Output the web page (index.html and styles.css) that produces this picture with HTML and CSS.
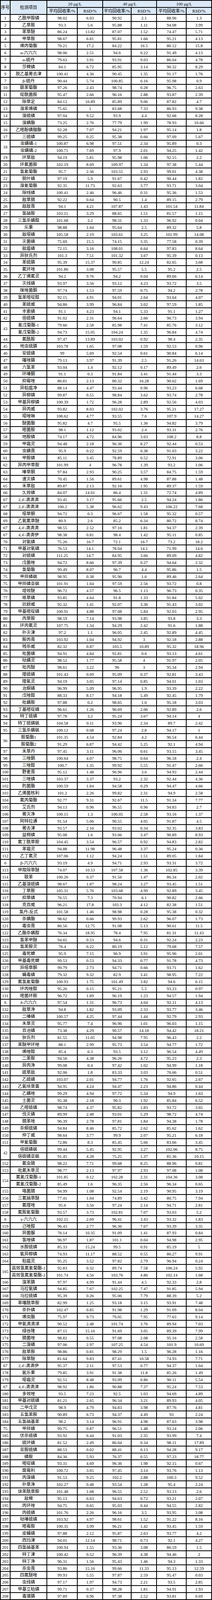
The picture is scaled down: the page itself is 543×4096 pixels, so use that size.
FILE: index.html
```html
<!DOCTYPE html>
<html lang="zh">
<head>
<meta charset="utf-8">
<title>回收率与RSD</title>
<link rel="stylesheet" href="styles.css">
</head>
<body>
<div class="sheet">
<p class="h r2">序号<p class="h r2">检测项目<p class="h c2">20 μg/L<p class="h c2">40 μg/L<p class="h c2">100 μg/L
<p class="h">平均回收率/%<p class="h">RSD/%<p class="h">平均回收率/%<p class="h">RSD/%<p class="h">平均回收率/%<p class="h">RSD/%
<p>1<p>乙酰甲胺磷<p>98.02<p>6.03<p>90.92<p>2.1<p>88.96<p>1.3
<p>2<p>乙草胺<p>93.3<p>5.6<p>95.88<p>1.11<p>94.08<p>3.99
<p>3<p>苯草醚<p>86.24<p>13.82<p>87.07<p>1.52<p>74.47<p>5.71
<p>4<p>甲草胺<p>98.67<p>6.81<p>95.81<p>1.66<p>95.21<p>4.13
<p>5<p>烯丙菊酯<p>70.21<p>17.2<p>84.22<p>16.5<p>80.12<p>15.8
<p>6<p>α-六六六<p>98.06<p>2.51<p>94.6<p>0.22<p>91.49<p>4.13
<p>7<p>α-硫丹<p>79.63<p>3.91<p>93.91<p>9.03<p>86.04<p>4.78
<p>8<p>莎稗磷<p>84.1<p>6.72<p>85.95<p>3.14<p>90.32<p>8.29
<p>9<p>脱乙基莠去津<p>100.41<p>4.36<p>90.45<p>1.35<p>91.17<p>1.76
<p>7<p>β-硫丹<p>90.44<p>5.74<p>100.85<p>6.16<p>95.98<p>0.9
<p>10<p>联苯菊酯<p>97.26<p>2.43<p>98.74<p>0.28<p>96.75<p>2.63
<p>11<p>啶酰菌胺<p>95.47<p>2.66<p>96.16<p>2.88<p>93.87<p>2.39
<p>12<p>除草定<p>84.12<p>16.89<p>85.89<p>9.06<p>87.82<p>4.7
<p>13<p>溴苯烯磷<p>75.65<p>1<p>83.68<p>7.33<p>86.93<p>9.38
<p>14<p>溴硫磷<p>97.04<p>9.52<p>93.9<p>4.4<p>92.68<p>8.28
<p>15<p>溴螨酯<p>73.25<p>2.76<p>77.79<p>1.99<p>78.93<p>10.66
<p>16<p>乙嘧酚磺酸酯<p>92.28<p>7.07<p>94.21<p>1.97<p>95.14<p>1.8
<p>17<p>三硫磷<p>99.25<p>0.25<p>95.38<p>0.66<p>97.09<p>5.67
<p class="r2">18<p>虫螨磷-1<p>100.87<p>6.98<p>97.51<p>2.34<p>95.89<p>0.3
<p>虫螨磷-2<p>100.71<p>7.69<p>97.9<p>2.01<p>94.25<p>1.42
<p>19<p>环草敌<p>94.19<p>5.81<p>95.98<p>1.06<p>92.15<p>2.2
<p>20<p>环氟菌胺<p>102.19<p>8.69<p>109.97<p>1.34<p>97.38<p>5.44
<p>21<p>氯氰菊酯<p>95.7<p>2.36<p>103.55<p>2.93<p>99.01<p>4.38
<p>22<p>脱叶磷<p>97.19<p>5.9<p>91.67<p>0.42<p>90.44<p>1.82
<p>23<p>溴氰菊酯<p>92.35<p>11.73<p>92.63<p>3.77<p>93.71<p>3.04
<p>24<p>除线磷<p>100.41<p>2.46<p>96.46<p>0.31<p>95.36<p>1.53
<p>25<p>敌草腈<p>92.22<p>0.64<p>90.5<p>1.4<p>89.15<p>2.79
<p>26<p>敌敌畏<p>94.1<p>4.21<p>107.87<p>1.43<p>101.54<p>11.84
<p>27<p>氯硝胺<p>103.15<p>3.29<p>88.65<p>1.51<p>81.57<p>1.15
<p>28<p>三氯杀螨醇<p>101.68<p>3.2<p>98.31<p>1.33<p>96.92<p>0.04
<p>29<p>乐果<p>98.88<p>1.64<p>95.64<p>2.5<p>89.32<p>5.8
<p>30<p>敌噁磷<p>105.58<p>2.19<p>103.61<p>3.25<p>101.99<p>14.08
<p>31<p>灭菌磷<p>75.69<p>15.5<p>74.15<p>3.35<p>77.58<p>0.39
<p>32<p>敌瘟磷<p>72.15<p>3.16<p>108.01<p>6.64<p>97.83<p>8.64
<p>33<p>异狄氏剂<p>101.3<p>7.51<p>101.32<p>3.67<p>95.39<p>0.13
<p>34<p>苯硫膦<p>95.39<p>15.37<p>90.85<p>12.24<p>82.65<p>3.68
<p>35<p>氟环唑<p>101.86<p>3.08<p>95.57<p>5.5<p>95.2<p>2.5
<p>36<p>乙丁烯氟灵<p>94.2<p>9.76<p>94.2<p>0.04<p>89.66<p>6.14
<p>37<p>灭线磷<p>93.97<p>3.56<p>93.12<p>4.23<p>93.72<p>3.5
<p>38<p>咪唑菌酮<p>97.74<p>1.53<p>97.59<p>0.75<p>94.2<p>2.78
<p>39<p>氯苯嘧啶醇<p>92.15<p>4.91<p>94.01<p>2.64<p>93.64<p>4.07
<p>40<p>苯硫威<p>94.86<p>3.99<p>96.84<p>3.02<p>97.59<p>1.85
<p>41<p>丰索磷<p>91.1<p>4.23<p>94.1<p>5.33<p>91.1<p>1.27
<p>42<p>倍硫磷<p>91.02<p>2.31<p>96.64<p>2.66<p>90.73<p>3.94
<p class="r2">43<p>氰戊菊酯-1<p>79.66<p>2.58<p>85.98<p>7.41<p>85.76<p>3.12
<p>氰戊菊酯-2<p>94.73<p>15.05<p>104.24<p>1.35<p>96.84<p>4.74
<p>44<p>氟酰胺<p>97.47<p>13.89<p>103.02<p>0.92<p>98.4<p>2.35
<p>45<p>地虫硫膦<p>103.78<p>1.65<p>97.08<p>1.59<p>92.53<p>0.96
<p>46<p>安硫磷<p>99<p>5.69<p>92.54<p>0.61<p>90.84<p>6.14
<p>47<p>噻唑膦<p>79.13<p>3.97<p>91.39<p>2.5<p>91.26<p>14.63
<p>48<p>六氯苯<p>93.04<p>1.4<p>92.12<p>0.17<p>89.49<p>2.6
<p>49<p>环嗪酮<p>91.1<p>0.3<p>91.84<p>3.41<p>91.44<p>3.3
<p>50<p>抑霉唑<p>86.81<p>2.13<p>80.32<p>16.28<p>90.62<p>1.69
<p>51<p>异稻瘟净<p>88.14<p>4.47<p>93.44<p>0.96<p>93.23<p>6.68
<p>52<p>异柳磷<p>99.87<p>0.55<p>98.84<p>3.62<p>93.74<p>2.78
<p>53<p>甲基异柳磷<p>100.39<p>1.72<p>96.28<p>2.89<p>92.56<p>4.03
<p>54<p>异丙威<p>93.82<p>8.03<p>102.02<p>3.76<p>95.21<p>17.27
<p>55<p>噁唑啉<p>108.62<p>4.77<p>93.55<p>7.6<p>107.9<p>14.27
<p>56<p>醚菌酯<p>95.82<p>4.7<p>95.5<p>1.36<p>94.82<p>3.79
<p>57<p>嘧菌胺<p>98.1<p>1.12<p>93.02<p>2.4<p>93.31<p>2.76
<p>58<p>地胺磷<p>74.17<p>4.72<p>84.96<p>3.63<p>108.2<p>8.8
<p>59<p>甲霜灵<p>94.48<p>2.18<p>96.36<p>8.27<p>92.44<p>0.53
<p>60<p>虫螨畏<p>95.9<p>0.22<p>92.59<p>0.38<p>91.03<p>3.22
<p>61<p>甲胺磷<p>85.11<p>3.45<p>78.89<p>0.52<p>72.91<p>3.06
<p>62<p>异丙甲草胺<p>101.99<p>4<p>96.78<p>1.39<p>93.2<p>1.06
<p>63<p>嗪草酮<p>97.84<p>2.93<p>90.25<p>3.57<p>84.75<p>1.59
<p>64<p>速灭磷<p>70.45<p>1.56<p>89.61<p>4.98<p>87.88<p>1.48
<p>65<p>禾草敌<p>89.87<p>2.13<p>92.16<p>1.95<p>89.37<p>1.59
<p>66<p>久效磷<p>84.07<p>14.01<p>86.4<p>1.31<p>72.74<p>4.89
<p>67<p>2,4'-滴滴滴<p>93.45<p>3.17<p>95.66<p>2.5<p>94.24<p>1.86
<p>67<p>2,4'-滴滴涕<p>106.2<p>5.38<p>96.62<p>9.43<p>106.22<p>7.68
<p>68<p>噁草酮<p>94.72<p>0.3<p>96.67<p>1.58<p>95.32<p>0.57
<p>69<p>乙氧氟草醚<p>80.9<p>2.6<p>85.2<p>6.34<p>80.72<p>8.74
<p>67<p>4,4'-滴滴滴<p>98.55<p>2.52<p>97.16<p>1.81<p>94.37<p>2.39
<p>67<p>4,4'-滴滴伊<p>98.38<p>0.81<p>98.4<p>1.42<p>95.11<p>0.85
<p>70<p>对氧磷<p>75.26<p>16.7<p>72.1<p>16.7<p>73.2<p>18.2
<p>71<p>甲基对氧磷<p>76.53<p>14.1<p>78.04<p>14.1<p>71.99<p>14.6
<p>72<p>对硫磷<p>111.25<p>14.7<p>84.95<p>3.66<p>89.09<p>4.82
<p>73<p>戊菌唑<p>94.72<p>8.66<p>97.39<p>0.27<p>94.64<p>2.32
<p>74<p>氯菊酯<p>99.49<p>8.07<p>96.7<p>4.4<p>95.86<p>1.5
<p>75<p>甲拌磷砜<p>98.95<p>0.38<p>95.96<p>1.6<p>89.46<p>2.64
<p>75<p>甲拌磷亚砜<p>101.91<p>1.04<p>97.59<p>2.56<p>93.72<p>0.8
<p>76<p>增效醚<p>96.72<p>4.57<p>96.5<p>1.13<p>96.73<p>0.35
<p>77<p>哌草磷<p>93.85<p>4.64<p>91.8<p>1.33<p>91.84<p>5.02
<p>78<p>抗蚜威<p>92.32<p>1.41<p>92.07<p>3.36<p>91.43<p>3.02
<p>79<p>甲基嘧啶磷<p>100.91<p>4.88<p>97.08<p>5.84<p>92.03<p>2.95
<p>80<p>丙草胺<p>98.59<p>7.14<p>93.98<p>3.85<p>93.8<p>3.3
<p>81<p>环丙氟灵<p>107.75<p>1.34<p>94.29<p>2.42<p>91.6<p>1.88
<p>82<p>扑灭津<p>97.2<p>1.1<p>96.05<p>2.45<p>92.89<p>4.45
<p>83<p>胺丙畏<p>103.92<p>1.04<p>94.92<p>3<p>92.18<p>2.88
<p>84<p>残杀威<p>82.32<p>0.87<p>103.5<p>10.89<p>95.32<p>18.96
<p>85<p>吡菌磷<p>94.91<p>4.84<p>92.81<p>0.6<p>93.13<p>4.61
<p>86<p>哒螨灵<p>98.52<p>1.77<p>95.58<p>4<p>91.97<p>2.05
<p>87<p>吡丙醚<p>98.61<p>3.22<p>96<p>3<p>95.34<p>2.94
<p>88<p>喹硫磷<p>101.43<p>0.69<p>95.09<p>0.37<p>92.81<p>3.43
<p>89<p>喹氧灵<p>94.19<p>3.05<p>97.14<p>0.85<p>94.01<p>1.03
<p>90<p>治螟磷<p>96.99<p>5.09<p>96.95<p>1.9<p>93.39<p>2.22
<p>91<p>戊唑醇<p>88.33<p>8.17<p>94.18<p>5.49<p>92.45<p>1.79
<p>92<p>吡螨胺<p>97.88<p>0.2<p>98.65<p>1.6<p>95.18<p>3.03
<p>93<p>丁基嘧啶磷<p>96.61<p>1.26<p>96.69<p>2.06<p>92.89<p>2.6
<p>94<p>特丁硫磷<p>97.78<p>3.2<p>95.24<p>3.67<p>94.14<p>4
<p>94<p>特丁硫磷砜<p>104.58<p>0.11<p>93.96<p>2.34<p>89.7<p>2.42
<p>95<p>三氯杀螨砜<p>100.12<p>0.68<p>97.24<p>2.8<p>94.17<p>1
<p class="r2">96<p>胺菊酯1<p>101.35<p>4.54<p>92.84<p>4.2<p>96.54<p>6.44
<p>胺菊酯2<p>91.29<p>6.87<p>94.42<p>5.25<p>92.1<p>4.94
<p>97<p>禾草丹<p>97.45<p>3.11<p>96.06<p>0.61<p>93.15<p>3.45
<p>98<p>三唑酮<p>100.64<p>4.07<p>98.75<p>0.64<p>96.18<p>2.4
<p>99<p>三唑醇<p>100.7<p>1.35<p>99.92<p>5.55<p>91.47<p>2.66
<p>100<p>野麦畏<p>95.12<p>1.48<p>96.96<p>3.6<p>94.93<p>2.44
<p>101<p>三唑磷<p>103.37<p>3.37<p>93.2<p>2.32<p>92.44<p>4.36
<p>102<p>肟菌酯<p>100.59<p>1.84<p>94.58<p>0.29<p>94.47<p>4.66
<p>103<p>乙烯菌核利<p>101.2<p>2.26<p>99.82<p>2.31<p>94.9<p>2.58
<p>104<p>氟丙菊酯<p>92.77<p>9.31<p>92.67<p>11.5<p>91.34<p>7.77
<p>105<p>艾氏剂<p>94.13<p>0.96<p>96.55<p>0.96<p>94.83<p>2.7
<p>106<p>莠灭净<p>100.15<p>1.3<p>100.05<p>2.58<p>93.16<p>1.37
<p>107<p>阿特拉通<p>91.54<p>5.06<p>90.55<p>4.05<p>91.87<p>4.5
<p>108<p>莠去津<p>93.57<p>2.16<p>93.02<p>0.34<p>92.35<p>3.83
<p>109<p>益棉磷<p>95.08<p>1.6<p>93.06<p>3.47<p>90.89<p>8.93
<p>110<p>氟丁酰草胺<p>104.45<p>3.54<p>96.57<p>0.92<p>94.83<p>2.82
<p>111<p>苯霜灵<p>94.88<p>11.98<p>96.48<p>3.37<p>95.24<p>0.36
<p>112<p>乙丁氟灵<p>107.06<p>1.12<p>94.24<p>1.51<p>89.05<p>1.84
<p>6<p>β-六六六<p>93.19<p>4.9<p>94.71<p>2.93<p>93.31<p>3.72
<p>113<p>甲羧除草醚<p>74.07<p>10.53<p>107.58<p>1.36<p>102.85<p>3.39
<p>114<p>联苯<p>100.26<p>0.37<p>91.56<p>1.47<p>86.34<p>2.02
<p>115<p>乙基溴硫磷<p>98.67<p>1.87<p>98.24<p>3.27<p>93.45<p>1.51
<p>116<p>丁草胺<p>105.31<p>5.76<p>103.68<p>4.99<p>92.89<p>3.45
<p>117<p>抑草磷<p>76.55<p>7.3<p>70.94<p>6.1<p>90.82<p>2.66
<p>118<p>克百威<p>96.21<p>17.8<p>103.3<p>4.12<p>82.38<p>1.51
<p>119<p>氯丹-反式<p>101.58<p>1.46<p>98.98<p>0.28<p>95.38<p>0.32
<p>120<p>杀螨酯<p>98.62<p>0.66<p>99.93<p>2.62<p>96.07<p>1.73
<p>121<p>毒虫畏<p>86.56<p>12.75<p>91.08<p>5.13<p>90.61<p>11.5
<p>122<p>乙酯杀螨醇<p>76.34<p>18.95<p>78.4<p>7.95<p>81.31<p>11.43
<p>123<p>氯苯甲醚<p>94.65<p>0.53<p>94.6<p>0.31<p>92.24<p>2.23
<p>124<p>氯苯胺灵<p>76.4<p>6.22<p>80.19<p>5.12<p>79.68<p>7.57
<p>125<p>毒死蜱<p>95.9<p>7.15<p>96.9<p>3.91<p>95.96<p>2.01
<p>126<p>甲基毒死蜱<p>99.53<p>0.53<p>94.33<p>0.77<p>91.78<p>4.73
<p>127<p>异噁草酮<p>99.79<p>2.73<p>94.71<p>0.66<p>93.71<p>1.62
<p>128<p>蝇毒磷<p>79.32<p>9.32<p>82.9<p>3.41<p>98.95<p>7.22
<p>129<p>氟氯氰菊酯<p>100.93<p>1.75<p>101.49<p>3.82<p>94.6<p>6.15
<p>130<p>环丙唑醇<p>95.26<p>0.15<p>95.21<p>5.5<p>93.23<p>0.97
<p>131<p>嘧菌环胺<p>96.72<p>1.89<p>96.19<p>1.23<p>94.57<p>1.94
<p>6<p>δ-六六六<p>97.54<p>1.31<p>96.73<p>4.64<p>92.11<p>4.13
<p>132<p>敌草净<p>94.8<p>1.82<p>93.09<p>2.33<p>93.77<p>3.46
<p>133<p>二嗪磷<p>100.57<p>4.25<p>97.44<p>1.44<p>92.79<p>2.93
<p>134<p>禾草灵<p>95.77<p>7.4<p>96.96<p>1.01<p>96.03<p>1.15
<p>135<p>百治磷<p>73.38<p>4.29<p>90.57<p>14.18<p>94.42<p>18.21
<p>136<p>狄氏剂<p>81.55<p>11.05<p>94.98<p>7.95<p>96.43<p>2.2
<p>137<p>苯醚甲环唑<p>88.1<p>2.99<p>95.73<p>3.54<p>94.77<p>1.72
<p>138<p>烯唑醇<p>85.4<p>6.3<p>93.5<p>3.12<p>96.54<p>4.49
<p>139<p>二苯胺<p>94.56<p>4.38<p>96.26<p>4.72<p>95.23<p>2.3
<p>140<p>异丙净<p>99.08<p>0.4<p>97.42<p>1.02<p>94.99<p>1.18
<p>141<p>硫草敌<p>92.06<p>1.8<p>83.33<p>3.03<p>76.66<p>0.51
<p>142<p>乙硫磷<p>103.07<p>2.01<p>94.77<p>1.76<p>92.65<p>2.67
<p>143<p>乙氧呋草黄<p>94.95<p>4.24<p>94.47<p>2.23<p>94.86<p>0.44
<p>144<p>乙螨唑<p>99.29<p>4.94<p>97.72<p>5.34<p>94.9<p>1.63
<p>145<p>土菌灵<p>95.38<p>2.18<p>90.3<p>1.92<p>85.84<p>6.52
<p>146<p>乙嘧硫磷<p>98.74<p>4.37<p>95.82<p>1.83<p>93.72<p>3.65
<p>147<p>伐灭磷<p>89.99<p>2.48<p>93.01<p>5.29<p>98.72<p>4.74
<p>148<p>腈苯唑<p>96.39<p>2.78<p>97.81<p>1.84<p>94.38<p>1.78
<p>149<p>杀螟硫磷<p>94.84<p>8.46<p>85.72<p>2.62<p>85.62<p>1.62
<p>150<p>仲丁威<p>98.64<p>3.77<p>99.9<p>2.07<p>95.21<p>6.18
<p>151<p>甲氰菊酯<p>72.86<p>8.3<p>85.45<p>5.66<p>83.66<p>3.45
<p class="r2">42<p>倍硫磷砜<p>99.44<p>5.45<p>92.95<p>3.27<p>102.06<p>8.75
<p>倍硫磷亚砜<p>91.45<p>4.28<p>75.25<p>1.37<p>81.36<p>10.15
<p>152<p>氟虫腈<p>98.22<p>7.71<p>99.68<p>8.25<p>88.96<p>0.81
<p>153<p>吡氟禾草灵<p>98.77<p>2.13<p>97.97<p>2.93<p>97.08<p>1.08
<p class="r2">154<p>氟氰戊菊酯-1<p>101.85<p>0.12<p>102.28<p>2.31<p>104.36<p>3.08
<p>氟氰戊菊酯-2<p>85.49<p>1.6<p>96.35<p>2.56<p>96.34<p>0.65
<p>155<p>咯菌腈<p>94.99<p>1.08<p>92.54<p>2.19<p>90.95<p>3.19
<p>156<p>三氟硝草醚<p>77.41<p>1.04<p>74.89<p>3.42<p>80.75<p>7.94
<p>157<p>氟喹唑<p>95.6<p>3.56<p>97.24<p>2.14<p>94.71<p>2.81
<p>158<p>氟胺氰菊酯<p>93.57<p>3.73<p>102.81<p>7.07<p>93.03<p>5.2
<p>6<p>γ-六六六<p>102.15<p>2.69<p>96.41<p>3.43<p>93.32<p>1.83
<p>159<p>己唑醇<p>96.43<p>2.77<p>96.36<p>7.67<p>93.39<p>3.35
<p>160<p>异菌脲<p>76.14<p>10.35<p>91.09<p>1.41<p>87.93<p>0.84
<p>161<p>氯唑磷<p>96.97<p>1.87<p>101.1<p>0.04<p>94.98<p>2.95
<p>162<p>水胺硫磷<p>85.33<p>15.24<p>99.5<p>0.91<p>85.19<p>5
<p>163<p>氧异柳磷<p>74.93<p>11.17<p>88.52<p>0.55<p>86.27<p>9.91
<p>164<p>稻瘟灵<p>95.25<p>3.52<p>97.82<p>2.79<p>96.94<p>0.24
<p class="r2">165<p>高效氯氟氰菊酯-1<p>92.83<p>0.32<p>89.74<p>7.58<p>106.24<p>5.92
<p>高效氯氟氰菊酯-2<p>101.74<p>4.56<p>103.76<p>4.86<p>102.14<p>1.68
<p>166<p>溴苯膦<p>97.97<p>4.99<p>91.44<p>4.5<p>92.33<p>2.8
<p>167<p>马拉氧磷<p>94.85<p>7.67<p>102.25<p>7.47<p>91.85<p>5.94
<p>168<p>马拉硫磷<p>95.39<p>0.26<p>95.06<p>7.79<p>88.39<p>5.2
<p>169<p>苯噻酰草胺<p>82.99<p>1.25<p>93.18<p>3.15<p>93.91<p>7.48
<p>170<p>杀扑磷<p>102.47<p>0.85<p>91.98<p>1.29<p>91.09<p>8.04
<p>171<p>烯虫酯<p>75.97<p>9.73<p>79.05<p>7.95<p>77.63<p>9.14
<p>172<p>甲氧滴滴涕<p>90.52<p>2.48<p>101.74<p>3.76<p>89.94<p>7.03
<p>173<p>绿谷隆<p>87.15<p>15.16<p>91.69<p>3.05<p>89.39<p>7.99
<p>174<p>腈菌唑<p>98.82<p>0.55<p>97.08<p>2.08<p>95.16<p>2.58
<p>175<p>二溴磷<p>97.06<p>2.97<p>107.25<p>4.54<p>101.9<p>10.69
<p>176<p>敌草胺<p>98.86<p>0.81<p>98.29<p>1.5<p>96.28<p>1.16
<p>177<p>除草醚<p>81.64<p>9.83<p>87.41<p>10.58<p>74.93<p>7.71
<p>67<p>2,4'-滴滴伊<p>95.37<p>2.11<p>97.53<p>0.77<p>94.37<p>1.04
<p>178<p>氧乐果<p>79.85<p>3.91<p>91.38<p>11.8<p>85.26<p>1.49
<p>179<p>噁霜灵<p>92.51<p>8.48<p>93.09<p>0.86<p>90.11<p>5.54
<p>67<p>4,4'-滴滴涕<p>98.92<p>1.86<p>90.88<p>7.37<p>95.24<p>7.53
<p>180<p>多效唑<p>93.5<p>7.23<p>92.5<p>1.03<p>94.69<p>4.89
<p>181<p>甲基对硫磷<p>81.21<p>2.65<p>96.34<p>3.21<p>89.93<p>4.05
<p>182<p>二甲戊灵<p>98.9<p>4.79<p>94.83<p>3.98<p>87.76<p>4.81
<p>183<p>五氯苯胺<p>90.89<p>6.73<p>94.37<p>4.49<p>93<p>2.24
<p>184<p>五氯硝基苯<p>98.2<p>3.14<p>96.91<p>4.98<p>87.63<p>3.98
<p>75<p>甲拌磷<p>99.75<p>0.87<p>96.51<p>1.48<p>93.24<p>2.06
<p>185<p>伏杀硫磷<p>93.92<p>6.44<p>91.03<p>2.35<p>93.99<p>7.4
<p>186<p>硫环磷<p>81.52<p>2.49<p>86.04<p>0.34<p>98.11<p>17.89
<p>187<p>亚胺硫磷<p>88.53<p>0.02<p>88.41<p>0.13<p>94.28<p>9.17
<p>188<p>磷胺<p>84.36<p>5.93<p>76.37<p>0.55<p>97.23<p>18.77
<p>189<p>嘧啶磷<p>93.31<p>4.69<p>96.36<p>1.98<p>92.15<p>0.67
<p>190<p>腐霉利<p>100.72<p>3.65<p>97.45<p>3.14<p>93.76<p>1.13
<p>191<p>丙溴磷<p>91.53<p>9.25<p>102.2<p>2.88<p>100.3<p>9.52
<p>192<p>扑草净<p>102.27<p>0.48<p>93.54<p>1.28<p>95.4<p>2.24
<p>193<p>炔苯酰草胺<p>101.48<p>1.68<p>96.55<p>2.52<p>93.13<p>2.6
<p>194<p>敌稗<p>95.13<p>6.63<p>94.63<p>0.72<p>93.21<p>2.07
<p>195<p>丙环唑<p>94.75<p>0.65<p>95.03<p>0.44<p>94.55<p>2.82
<p>196<p>丙硫磷<p>101.76<p>2.26<p>96.16<p>3.5<p>93.95<p>3.08
<p>197<p>哒嗪硫磷<p>103.92<p>4.97<p>98.61<p>1.52<p>91.22<p>8.16
<p>198<p>嘧霉胺<p>100.35<p>3.99<p>96.21<p>1.42<p>93.45<p>1.59
<p>199<p>皮蝇磷<p>97.88<p>2.12<p>95.87<p>2.63<p>93.77<p>4.2
<p>200<p>西玛津<p>94.01<p>12.14<p>98.71<p>0.73<p>92.1<p>4.27
<p>201<p>四氯硝基苯<p>100.94<p>1.55<p>93.36<p>3.08<p>86.59<p>1.5
<p>202<p>特丁津<p>100.42<p>0.52<p>96.39<p>4.38<p>94.46<p>2
<p>203<p>特丁净<p>96.31<p>1.56<p>95.43<p>1.46<p>94.3<p>1.33
<p>204<p>杀虫畏<p>93.86<p>15.16<p>99.66<p>11.33<p>95.13<p>12.59
<p>205<p>四氟醚唑<p>99.93<p>5.55<p>97.87<p>2.59<p>95.47<p>0.03
<p>206<p>虫线磷<p>97.17<p>1.97<p>94.73<p>2.21<p>93.5<p>2.85
<p>207<p>甲基立枯磷<p>99.71<p>0.37<p>98.28<p>1.81<p>94.91<p>1.93
<p>208<p>毒壤膦<p>97.89<p>0.96<p>97.38<p>2.52<p>93.81<p>0.69
</div>
</body>
</html>
```

FILE: styles.css
```css
html, body {
  margin: 0;
  padding: 0;
  background: #fff;
}

.sheet {
  display: grid;
  grid-template-columns: 22.9px 92.5px 75.9px 62.7px 71.4px 63px 74px 62.6px;
  grid-auto-rows: 1fr;
  gap: 2px;
  padding: 2px;
  width: 543px;
  height: 4096px;
  box-sizing: border-box;
  background: #000;
  font-family: "Liberation Serif", "Noto Sans CJK SC", serif;
  font-size: 11px;
  color: #000;
}

.sheet > p {
  margin: 0;
  min-height: 0;
  background: #fff;
  display: flex;
  align-items: center;
  justify-content: center;
  line-height: 12px;
  white-space: nowrap;
  overflow: hidden;
}

.sheet > p.h {
  background: #dbe8f6;
}

.sheet > p.r2 {
  grid-row: span 2;
}

.sheet > p.c2 {
  grid-column: span 2;
}
```
